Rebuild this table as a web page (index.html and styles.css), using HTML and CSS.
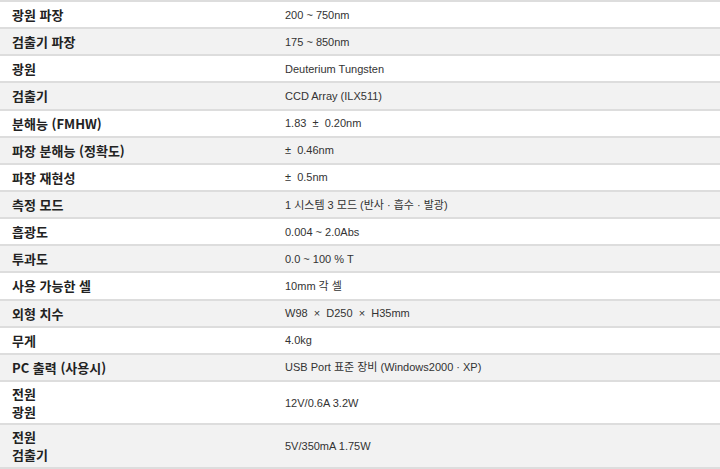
FILE: index.html
```html
<!DOCTYPE html>
<html lang="ko">
<head>
<meta charset="utf-8">
<title>사양</title>
<link rel="stylesheet" href="styles.css">
</head>
<body>
<table class="spec">
  <tbody>
    <tr><th>광원 파장</th><td>200 ~ 750nm</td></tr>
    <tr><th>검출기 파장</th><td>175 ~ 850nm</td></tr>
    <tr><th>광원</th><td>Deuterium Tungsten</td></tr>
    <tr><th>검출기</th><td>CCD Array (ILX511)</td></tr>
    <tr><th>분해능 (FMHW)</th><td>1.83 &nbsp;±&nbsp; 0.20nm</td></tr>
    <tr><th>파장 분해능 (정확도)</th><td>± &nbsp;0.46nm</td></tr>
    <tr><th>파장 재현성</th><td>± &nbsp;0.5nm</td></tr>
    <tr><th>측정 모드</th><td>1 시스템 3 모드 (반사 · 흡수 · 발광)</td></tr>
    <tr><th>흡광도</th><td>0.004 ~ 2.0Abs</td></tr>
    <tr><th>투과도</th><td>0.0 ~ 100 % T</td></tr>
    <tr><th>사용 가능한 셀</th><td>10mm 각 셀</td></tr>
    <tr><th>외형 치수</th><td>W98 &nbsp;×&nbsp; D250 &nbsp;×&nbsp; H35mm</td></tr>
    <tr><th>무게</th><td>4.0kg</td></tr>
    <tr><th>PC 출력 (사용시)</th><td>USB Port 표준 장비 (Windows2000 · XP)</td></tr>
    <tr class="double"><th><span class="line">전원</span><span class="line">광원</span></th><td>12V/0.6A 3.2W</td></tr>
    <tr class="double"><th><span class="line">전원</span><span class="line">검출기</span></th><td>5V/350mA 1.75W</td></tr>
  </tbody>
</table>
</body>
</html>
```
FILE: styles.css
```css
html, body {
  margin: 0;
  padding: 0;
  background: #ffffff;
}

.spec {
  width: 720px;
  border-collapse: collapse;
  border-top: 2px solid #dddddd;
  font-family: "Liberation Sans", "Noto Sans CJK KR", sans-serif;
}

.spec tr:nth-child(even) {
  background: #f2f2f2;
}

.spec th,
.spec td {
  height: 25.15px;
  padding: 0;
  border-bottom: 2px solid #dddddd;
  vertical-align: middle;
  text-align: left;
}

.spec th {
  width: 273px;
  padding-left: 12px;
  font-family: "Noto Sans CJK KR", "Liberation Sans", sans-serif;
  font-size: 13px;
  font-weight: bold;
  color: #222222;
  line-height: 15px;
}

.spec th .line {
  display: block;
  line-height: 18px;
}

.spec td {
  font-size: 11px;
  color: #333333;
  line-height: 14px;
}

.spec tr.double th,
.spec tr.double td {
  height: 41.5px;
}
```
